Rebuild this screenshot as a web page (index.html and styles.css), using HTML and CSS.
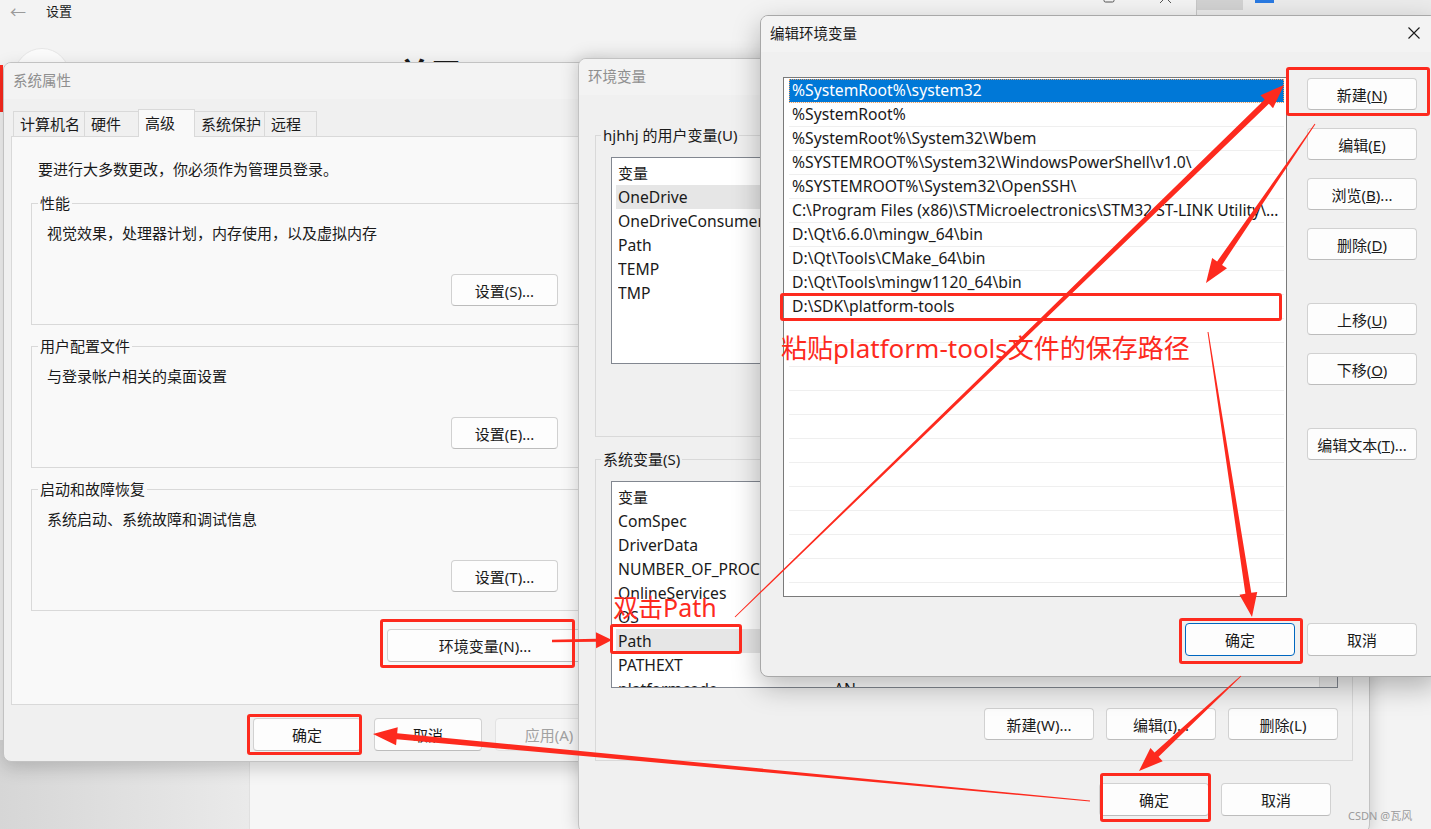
FILE: index.html
```html
<!DOCTYPE html>
<html lang="zh-CN">
<head>
  <meta charset="UTF-8" />
  <meta name="viewport" content="width=device-width, initial-scale=1.0"/>
  <title>编辑环境变量</title>
  <link rel="stylesheet" href="styles.css">
</head>
<body>
<div class="desktop">

  <!-- settings app behind the dialogs -->
  <div class="settings-bar">
    <span class="back">&#8592;</span>
    <span class="app-name">设置</span>
  </div>
  <div class="avatar"></div>
  <div class="page-title">关于</div>
  <div class="caption-btns">
    <svg width="12" height="12" viewBox="0 0 12 12"><rect x="1" y="1" width="10" height="10" rx="1.5" fill="none" stroke="#555" stroke-width="1"/></svg>
    <svg width="13" height="13" viewBox="0 0 13 13"><path d="M1 1 L12 12 M12 1 L1 12" stroke="#555" stroke-width="1"/></svg>
  </div>
  <div class="other-win"><span class="ow-gray"></span><span class="ow-blue"></span></div>
  <div class="side-stripe"></div>
  <div class="under-shade"></div>
  <div class="under-card"></div>

  <!-- 系统属性 -->
  <div class="win win-sys">
    <div class="titlebar">系统属性</div>
    <div class="sys-body">
      <div class="tabs">
        <div class="tab">计算机名</div>
        <div class="tab">硬件</div>
        <div class="tab active">高级</div>
        <div class="tab">系统保护</div>
        <div class="tab">远程</div>
      </div>
      <div class="tab-panel">
        <p class="notice">要进行大多数更改，你必须作为管理员登录。</p>
        <fieldset class="group sys-group">
          <legend>性能</legend>
          <p>视觉效果，处理器计划，内存使用，以及虚拟内存</p>
          <div class="group-actions"><button class="btn">设置(S)...</button></div>
        </fieldset>
        <fieldset class="group sys-group">
          <legend>用户配置文件</legend>
          <p>与登录帐户相关的桌面设置</p>
          <div class="group-actions"><button class="btn">设置(E)...</button></div>
        </fieldset>
        <fieldset class="group sys-group">
          <legend>启动和故障恢复</legend>
          <p>系统启动、系统故障和调试信息</p>
          <div class="group-actions"><button class="btn">设置(T)...</button></div>
        </fieldset>
        <div class="env-row"><button class="btn btn-env">环境变量(N)...</button></div>
      </div>
      <div class="dialog-actions">
        <button class="btn">确定</button>
        <button class="btn">取消</button>
        <button class="btn" disabled>应用(A)</button>
      </div>
    </div>
  </div>

  <!-- 环境变量 -->
  <div class="win win-env">
    <div class="titlebar">环境变量</div>
    <div class="env-body">
      <fieldset class="group env-group">
        <legend>hjhhj 的用户变量(U)</legend>
        <div class="listview">
          <div class="lv-body">
            <div class="lv-head"><span>变量</span><span>值</span></div>
            <div class="lv-row sel"><span>OneDrive</span><span>C:\Users\hjhhj\OneDrive</span></div>
            <div class="lv-row"><span>OneDriveConsumer</span><span>C:\Users\hjhhj\OneDrive</span></div>
            <div class="lv-row"><span>Path</span><span>C:\Users\hjhhj\AppData\Local\Microsoft\WindowsApps;</span></div>
            <div class="lv-row"><span>TEMP</span><span>C:\Users\hjhhj\AppData\Local\Temp</span></div>
            <div class="lv-row"><span>TMP</span><span>C:\Users\hjhhj\AppData\Local\Temp</span></div>
          </div>
        </div>
        <div class="group-actions env-actions-row">
          <button class="btn">新建(N)...</button>
          <button class="btn">编辑(E)...</button>
          <button class="btn">删除(D)</button>
        </div>
      </fieldset>
      <fieldset class="group env-group">
        <legend>系统变量(S)</legend>
        <div class="listview">
          <div class="lv-body">
            <div class="lv-head"><span>变量</span><span>值</span></div>
            <div class="lv-row"><span>ComSpec</span><span>C:\WINDOWS\system32\cmd.exe</span></div>
            <div class="lv-row"><span>DriverData</span><span>C:\Windows\System32\Drivers\DriverData</span></div>
            <div class="lv-row"><span>NUMBER_OF_PROCESSORS</span><span>16</span></div>
            <div class="lv-row"><span>OnlineServices</span><span>Online Services</span></div>
            <div class="lv-row"><span>OS</span><span>Windows_NT</span></div>
            <div class="lv-row sel"><span>Path</span><span>C:\WINDOWS\system32;C:\WINDOWS;</span></div>
            <div class="lv-row"><span>PATHEXT</span><span>.COM;.EXE;.BAT;.CMD;.VBS;.VBE;.JS;.JSE;.WSF;.WSH;.MSC</span></div>
            <div class="lv-row"><span>platformcode</span><span>AN</span></div>
          </div>
          <div class="lv-scroll"></div>
        </div>
        <div class="group-actions env-actions-row">
          <button class="btn">新建(W)...</button>
          <button class="btn">编辑(I)...</button>
          <button class="btn">删除(L)</button>
        </div>
      </fieldset>
      <div class="env-actions">
        <button class="btn">确定</button>
        <button class="btn">取消</button>
      </div>
    </div>
  </div>

  <!-- 编辑环境变量 -->
  <div class="win win-edit">
    <div class="titlebar">
      <span>编辑环境变量</span>
      <span class="close">
        <svg width="12" height="12" viewBox="0 0 12 12"><path d="M0.5 0.5 L11.5 11.5 M11.5 0.5 L0.5 11.5" stroke="#1a1a1a" stroke-width="1.1"/></svg>
      </span>
    </div>
    <div class="edit-body">
      <div class="path-list">
        <div class="path-row sel">%SystemRoot%\system32</div>
        <div class="path-row">%SystemRoot%</div>
        <div class="path-row">%SystemRoot%\System32\Wbem</div>
        <div class="path-row">%SYSTEMROOT%\System32\WindowsPowerShell\v1.0\</div>
        <div class="path-row">%SYSTEMROOT%\System32\OpenSSH\</div>
        <div class="path-row">C:\Program Files (x86)\STMicroelectronics\STM32 ST-LINK Utility\ST-LINK Utility</div>
        <div class="path-row">D:\Qt\6.6.0\mingw_64\bin</div>
        <div class="path-row">D:\Qt\Tools\CMake_64\bin</div>
        <div class="path-row">D:\Qt\Tools\mingw1120_64\bin</div>
        <div class="path-row">D:\SDK\platform-tools</div>
        <div class="path-row"></div>
        <div class="path-row"></div>
        <div class="path-row"></div>
        <div class="path-row"></div>
        <div class="path-row"></div>
        <div class="path-row"></div>
        <div class="path-row"></div>
        <div class="path-row"></div>
        <div class="path-row"></div>
        <div class="path-row"></div>
        <div class="path-row"></div>
        <div class="path-row"></div>
      </div>
      <div class="side-btns">
        <button class="btn">新建(<u>N</u>)</button>
        <button class="btn">编辑(<u>E</u>)</button>
        <button class="btn">浏览(<u>B</u>)...</button>
        <button class="btn">删除(<u>D</u>)</button>
        <button class="btn gap-before">上移(<u>U</u>)</button>
        <button class="btn">下移(<u>O</u>)</button>
        <button class="btn gap-before">编辑文本(<u>T</u>)...</button>
      </div>
      <div class="edit-actions">
        <button class="btn btn-default">确定</button>
        <button class="btn">取消</button>
      </div>
    </div>
  </div>

  <!-- red annotations -->
  <div class="mark mark-new"></div>
  <div class="mark mark-sdk"></div>
  <div class="mark mark-path"></div>
  <div class="mark mark-envbtn"></div>
  <div class="mark mark-ok-sys"></div>
  <div class="mark mark-ok-env"></div>
  <div class="mark mark-ok-edit"></div>

  <div class="note note-dbl">双击Path</div>
  <div class="note note-paste">粘贴platform-tools文件的保存路径</div>

  <svg class="arrows" width="1431" height="829" viewBox="0 0 1431 829">
    <polygon points="552,642.2 596,641.8 596.1,648.3 612,640 595.9,632.3 596,638.8 552,639.8"/>
    <polygon points="735.35,617.36 1268.86,103.85 1273.03,108.16 1284,85 1260.51,95.24 1264.68,99.55 734.65,616.64"/>
    <polygon points="1314.59,123.72 1217.10,261.51 1212.15,258.12 1206,283 1227.00,268.30 1222.04,264.91 1315.41,124.28"/>
    <polygon points="1207.51,332.08 1245.38,593.74 1239.45,594.65 1252,617 1257.23,591.91 1251.30,592.82 1208.49,331.92"/>
    <polygon points="1240.66,675.63 1154.52,752.45 1150.43,748.05 1139,771 1162.69,761.23 1158.60,756.84 1241.34,676.37"/>
    <polygon points="1090.05,800.50 397.18,733.24 397.74,727.27 373,734 396.06,745.19 396.62,739.22 1089.95,801.50"/>
  </svg>

  <div class="watermark">CSDN @瓦风</div>
</div>
</body>
</html>
```

FILE: styles.css
```css
* {
  box-sizing: border-box;
}
body {
  margin: 0;
  font-family: "Noto Sans", "Noto Sans CJK SC", sans-serif;
  font-size: 15px;
  color: #1a1a1a;
  background: #f3f3f3;
}
.desktop {
  position: relative;
  width: 1431px;
  height: 829px;
  overflow: hidden;
  background: #f3f3f3;
}

/* settings app in the back */
.settings-bar {
  position: absolute;
  left: 10px;
  top: 0;
  height: 21px;
  display: flex;
  align-items: center;
  gap: 20px;
  font-size: 13px;
}
.back {
  color: #9a9a9a;
  font-size: 16px;
}
.avatar {
  position: absolute;
  left: 14px;
  top: 48px;
  width: 56px;
  height: 56px;
  border-radius: 50%;
  background: #fbfbfb;
  border: 1px solid #e6e6e6;
}
.page-title {
  position: absolute;
  left: 398px;
  top: 54px;
  font-size: 32px;
  font-weight: 600;
  line-height: 40px;
}
.caption-btns {
  position: absolute;
  left: 1103px;
  top: -9px;
  display: flex;
  gap: 44px;
}
.other-win {
  position: absolute;
  left: 1196px;
  top: 0;
  width: 235px;
  height: 15px;
  background: #ebebeb;
  border-left: 1px solid #c8c8c8;
  display: flex;
  align-items: flex-start;
}
.ow-gray {
  width: 46px;
  height: 10px;
  background: #d2d2d2;
}
.ow-blue {
  width: 19px;
  height: 3px;
  margin-left: 12px;
  background: #2a7ae2;
}
.side-stripe {
  position: absolute;
  left: 0;
  top: 65px;
  width: 3px;
  height: 47px;
  background: #fd2a1e;
}
.under-shade {
  position: absolute;
  left: 0;
  top: 740px;
  width: 249px;
  height: 90px;
  background: linear-gradient(90deg, #d6d6d6, #eaeaea);
}
.under-card {
  position: absolute;
  left: 249px;
  top: 740px;
  width: 340px;
  height: 90px;
  background: #f6f6f6;
  border-left: 1px solid #e0e0e0;
}

/* windows */
.win {
  position: absolute;
  display: flex;
  flex-direction: column;
  background: #f0f0f0;
  border: 1px solid #c2c2c2;
  border-radius: 8px;
  overflow: hidden;
}
.win-sys {
  left: 3px;
  top: 62px;
  width: 608px;
  height: 700px;
  box-shadow: 0 6px 18px rgba(0, 0, 0, 0.18);
}
.win-env {
  left: 578px;
  top: 58px;
  width: 792px;
  height: 775px;
  box-shadow: 0 0 18px rgba(0, 0, 0, 0.2);
}
.win-edit {
  left: 760px;
  top: 15px;
  width: 678px;
  height: 662px;
  border-color: #a8a8a8;
  box-shadow: 0 10px 28px rgba(0, 0, 0, 0.28);
}
.titlebar {
  height: 36px;
  flex: none;
  display: flex;
  align-items: center;
  justify-content: space-between;
  padding: 0 0 3px 9px;
  background: #f3f3f3;
  color: #8f8f8f;
  font-size: 14.5px;
}
.win-edit .titlebar {
  color: #1a1a1a;
}
.close {
  width: 46px;
  height: 33px;
  display: flex;
  align-items: center;
  justify-content: center;
}

.btn {
  height: 32px;
  padding: 0;
  border: 1px solid #d1d1d1;
  border-bottom-color: #bcbcbc;
  border-radius: 4px;
  background: #fdfdfd;
  font-family: inherit;
  font-size: 15px;
  color: #1a1a1a;
}
.btn:disabled {
  color: #a2a2a2;
  background: #f6f6f6;
  border-color: #e2e2e2;
}
.btn-default {
  border-color: #0067c0;
}

.group {
  margin: 0;
  border: 1px solid #d9d9d9;
  min-width: 0;
}
.group legend {
  padding: 0 2px;
  line-height: 20px;
}
.group p {
  margin: 0;
  line-height: 20px;
}
.group-actions {
  display: flex;
  justify-content: flex-end;
}

/* 系统属性 */
.sys-body {
  padding: 0 7px;
}
.tabs {
  display: flex;
  align-items: flex-end;
  height: 27px;
  margin-top: 10px;
  padding-left: 2px;
}
.tab {
  height: 25px;
  padding-left: 6px;
  line-height: 24px;
  border: 1px solid #d9d9d9;
  border-bottom: none;
  margin-left: -1px;
  background: #f0f0f0;
}
.tab:nth-child(1) { width: 72px; margin-left: 0; }
.tab:nth-child(2) { width: 55px; }
.tab:nth-child(3) { width: 57px; }
.tab:nth-child(4) { width: 71px; }
.tab:nth-child(5) { width: 53px; }
.tab.active {
  position: relative;
  z-index: 1;
  height: 28px;
  margin-bottom: -1px;
  line-height: 26px;
  background: #f9f9f9;
}
.tab-panel {
  height: 569px;
  background: #f9f9f9;
  border: 1px solid #d9d9d9;
}
.notice {
  margin: 22px 0 0 26px;
  line-height: 20px;
}
.sys-group {
  margin: 14px 19px 0;
  padding: 10px 24px 18px 15px;
}
.sys-group + .sys-group {
  margin-top: 11px;
}
.sys-group legend {
  margin-left: -9px;
}
.sys-group .group-actions {
  margin-top: 31px;
}
.sys-group .btn {
  width: 107px;
}
.env-row {
  display: flex;
  justify-content: flex-end;
  margin: 18px 19px 0;
}
.btn-env {
  width: 196px;
  height: 33px;
}
.dialog-actions {
  display: flex;
  justify-content: flex-end;
  gap: 13px;
  margin-top: 13px;
}
.dialog-actions .btn {
  width: 108px;
  height: 33px;
}

/* 环境变量 */
.env-body {
  padding: 0 16px;
}
.env-group {
  margin-top: 30px;
  padding: 12px 14px 20px 15px;
}
.env-group + .env-group {
  margin-top: 12px;
}
.env-group legend {
  margin-left: -10px;
}
.env-actions-row {
  gap: 12px;
  margin-top: 20px;
}
.env-actions-row .btn {
  width: 110px;
}
.listview {
  display: flex;
  height: 207px;
  border: 1px solid #828790;
  background: #fff;
  overflow: hidden;
  font-size: 15.7px;
}
.lv-body {
  flex: 1;
  min-width: 0;
  padding-left: 4px;
}
.lv-head,
.lv-row {
  display: grid;
  grid-template-columns: 216px 1fr;
  height: 24px;
  padding-left: 2px;
  line-height: 24px;
  white-space: nowrap;
}
.lv-head {
  height: 27px;
  padding-top: 3px;
  font-size: 15px;
}
.lv-head span,
.lv-row span {
  overflow: hidden;
}
.lv-row.sel {
  background: #e6e6e6;
}
.lv-scroll {
  width: 18px;
  background: #ededed;
  border-left: 1px solid #dedede;
}
.env-actions {
  display: flex;
  justify-content: flex-end;
  gap: 12px;
  margin: 22px 22px 0 0;
}
.env-actions .btn {
  width: 110px;
  height: 33px;
}

/* 编辑环境变量 */
.edit-body {
  display: grid;
  grid-template-columns: 504px 110px;
  column-gap: 20px;
  padding: 25px 20px 0 22px;
}
.path-list {
  height: 520px;
  padding: 1px 2px 0 5px;
  border: 1px solid #7a7a7a;
  background: #fff;
  overflow: hidden;
  font-size: 15.7px;
}
.path-row {
  height: 24px;
  padding-left: 3px;
  line-height: 23px;
  border-bottom: 1px solid #efefef;
  white-space: nowrap;
  overflow: hidden;
  text-overflow: ellipsis;
}
.path-row.sel {
  background: #0078d7;
  color: #fff;
  outline: 1px dotted #f0a060;
  outline-offset: -1px;
}
.side-btns {
  display: flex;
  flex-direction: column;
  gap: 18px;
  padding-top: 1px;
}
.side-btns .gap-before {
  margin-top: 25px;
}
.edit-actions {
  grid-column: 1 / -1;
  display: flex;
  justify-content: flex-end;
  gap: 12px;
  margin-top: 26px;
}
.edit-actions .btn {
  width: 110px;
  height: 33px;
}

/* red annotations */
.mark {
  position: absolute;
  border: 3px solid #fd2a1e;
  border-radius: 3px;
}
.mark-new { left: 1286px; top: 67px; width: 144px; height: 49px; }
.mark-sdk { left: 780px; top: 293px; width: 502px; height: 28px; }
.mark-path { left: 610px; top: 624px; width: 132px; height: 30px; }
.mark-envbtn { left: 380px; top: 619px; width: 195px; height: 49px; }
.mark-ok-sys { left: 247px; top: 714px; width: 115px; height: 41px; }
.mark-ok-env { left: 1100px; top: 773px; width: 111px; height: 49px; }
.mark-ok-edit { left: 1179px; top: 618px; width: 124px; height: 46px; }

.note {
  position: absolute;
  color: #fd2a1e;
  font-size: 25px;
  line-height: 30px;
  white-space: nowrap;
}
.note-dbl { left: 613px; top: 592px; }
.note-paste { left: 781px; top: 333px; font-size: 26px; }

.arrows {
  position: absolute;
  left: 0;
  top: 0;
  fill: #fd2a1e;
}
.watermark {
  position: absolute;
  left: 1348px;
  top: 807px;
  font-size: 11px;
  color: #9b9b9b;
}
```
